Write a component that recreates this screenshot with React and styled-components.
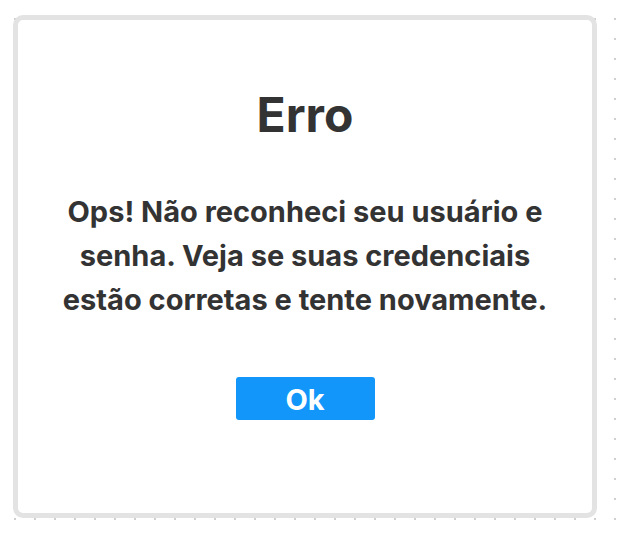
import React from "react";
import styled, { createGlobalStyle } from "styled-components";

const GlobalStyle = createGlobalStyle`
  html, body {
    margin: 0;
    padding: 0;
    width: 622px;
    height: 533px;
    overflow: hidden;
    background-color: #ffffff;
    background-image: radial-gradient(circle, #cfcfcf 1px, transparent 1.3px);
    background-size: 20px 20px;
    background-position: 5px 9px;
    font-family: Inter, "Noto Sans", sans-serif;
  }
`;

const Page = styled.div`
  padding: 15px 0 0 13px;
`;

const Card = styled.div`
  box-sizing: border-box;
  width: 584px;
  height: 503px;
  border: 5px solid #e3e3e3;
  border-radius: 10px;
  background: #ffffff;
  display: flex;
  flex-direction: column;
  align-items: center;
  padding-top: 67px;
`;

const Title = styled.h1`
  margin: 0;
  font-size: 48px;
  font-weight: 700;
  color: #333333;
  line-height: 56px;
`;

const Message = styled.p`
  margin: 47px 0 0;
  width: 490px;
  text-align: center;
  font-size: 29px;
  font-weight: 700;
  line-height: 43.8px;
  color: #333333;
`;

const OkButton = styled.button`
  margin-top: 56px;
  width: 139px;
  height: 43px;
  padding: 2px 0 0;
  border: none;
  border-radius: 3px;
  background: #1296fa;
  color: #ffffff;
  font-family: Inter, "Noto Sans", sans-serif;
  font-size: 29px;
  font-weight: 700;
  cursor: pointer;
`;

export default function App() {
  return (
    <>
      <GlobalStyle />
      <Page>
        <Card>
          <Title>Erro</Title>
          <Message>
            Ops! Não reconheci seu usuário e senha. Veja se suas credenciais estão corretas e tente novamente.
          </Message>
          <OkButton>Ok</OkButton>
        </Card>
      </Page>
    </>
  );
}
